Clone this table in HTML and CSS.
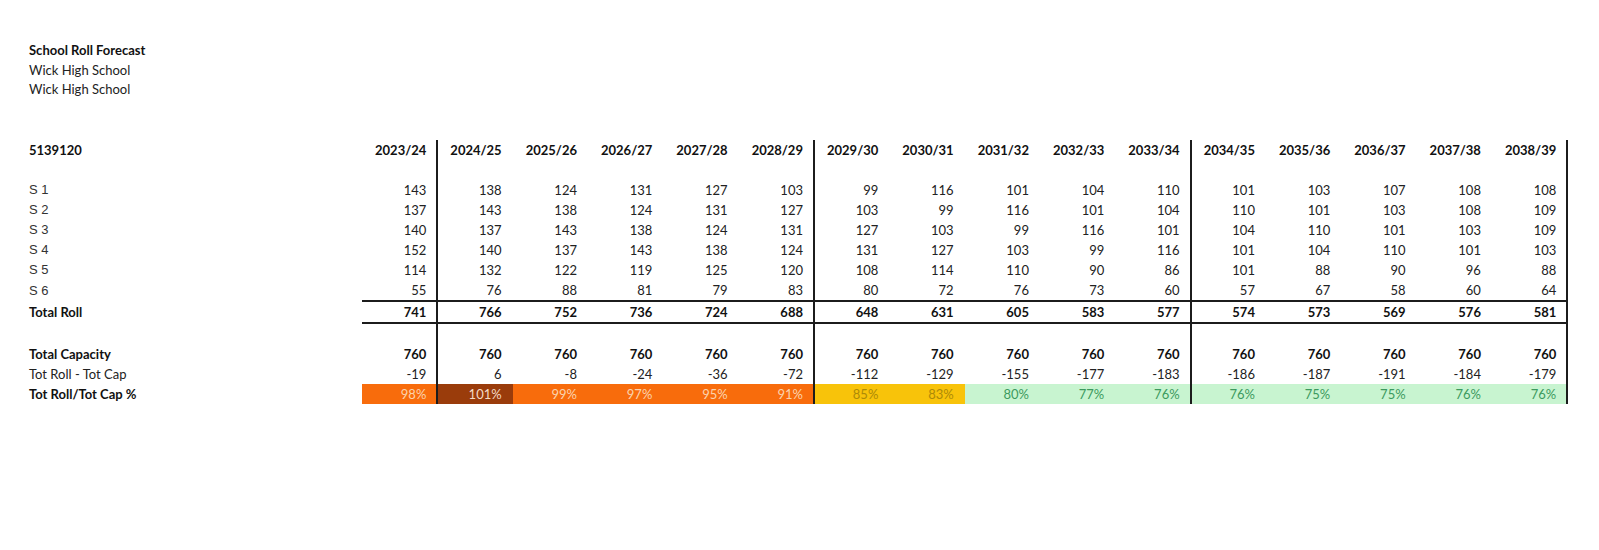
FILE: index.html
```html
<!DOCTYPE html>
<html>
<head>
<meta charset="utf-8">
<link rel="stylesheet" href="styles.css">
</head>
<body>
<div class="page">
  <div class="title">
    <div class="t-bold">School Roll Forecast</div>
    <div>Wick High School</div>
    <div>Wick High School</div>
  </div>
  <table class="grid">
    <colgroup>
      <col class="c-label">
      <col class="c-y"><col class="c-y"><col class="c-y"><col class="c-y"><col class="c-y"><col class="c-y"><col class="c-y"><col class="c-y">
      <col class="c-y"><col class="c-y"><col class="c-y"><col class="c-y"><col class="c-y"><col class="c-y"><col class="c-y"><col class="c-y">
    </colgroup>
    <tbody>
      <tr class="head">
        <td class="lbl b">5139120</td>
        <td class="s">2023/24</td><td>2024/25</td><td>2025/26</td><td>2026/27</td><td>2027/28</td><td class="s">2028/29</td>
        <td>2029/30</td><td>2030/31</td><td>2031/32</td><td>2032/33</td><td class="s">2033/34</td>
        <td>2034/35</td><td>2035/36</td><td>2036/37</td><td>2037/38</td><td class="s">2038/39</td>
      </tr>
      <tr class="blank">
        <td class="lbl"></td>
        <td class="s"></td><td></td><td></td><td></td><td></td><td class="s"></td>
        <td></td><td></td><td></td><td></td><td class="s"></td>
        <td></td><td></td><td></td><td></td><td class="s"></td>
      </tr>
      <tr>
        <td class="lbl ar">S 1</td>
        <td class="s">143</td><td>138</td><td>124</td><td>131</td><td>127</td><td class="s">103</td>
        <td>99</td><td>116</td><td>101</td><td>104</td><td class="s">110</td>
        <td>101</td><td>103</td><td>107</td><td>108</td><td class="s">108</td>
      </tr>
      <tr>
        <td class="lbl ar">S 2</td>
        <td class="s">137</td><td>143</td><td>138</td><td>124</td><td>131</td><td class="s">127</td>
        <td>103</td><td>99</td><td>116</td><td>101</td><td class="s">104</td>
        <td>110</td><td>101</td><td>103</td><td>108</td><td class="s">109</td>
      </tr>
      <tr>
        <td class="lbl ar">S 3</td>
        <td class="s">140</td><td>137</td><td>143</td><td>138</td><td>124</td><td class="s">131</td>
        <td>127</td><td>103</td><td>99</td><td>116</td><td class="s">101</td>
        <td>104</td><td>110</td><td>101</td><td>103</td><td class="s">109</td>
      </tr>
      <tr>
        <td class="lbl ar">S 4</td>
        <td class="s">152</td><td>140</td><td>137</td><td>143</td><td>138</td><td class="s">124</td>
        <td>131</td><td>127</td><td>103</td><td>99</td><td class="s">116</td>
        <td>101</td><td>104</td><td>110</td><td>101</td><td class="s">103</td>
      </tr>
      <tr>
        <td class="lbl ar">S 5</td>
        <td class="s">114</td><td>132</td><td>122</td><td>119</td><td>125</td><td class="s">120</td>
        <td>108</td><td>114</td><td>110</td><td>90</td><td class="s">86</td>
        <td>101</td><td>88</td><td>90</td><td>96</td><td class="s">88</td>
      </tr>
      <tr class="ruled">
        <td class="lbl ar">S 6</td>
        <td class="s">55</td><td>76</td><td>88</td><td>81</td><td>79</td><td class="s">83</td>
        <td>80</td><td>72</td><td>76</td><td>73</td><td class="s">60</td>
        <td>57</td><td>67</td><td>58</td><td>60</td><td class="s">64</td>
      </tr>
      <tr class="ruled bold">
        <td class="lbl">Total Roll</td>
        <td class="s">741</td><td>766</td><td>752</td><td>736</td><td>724</td><td class="s">688</td>
        <td>648</td><td>631</td><td>605</td><td>583</td><td class="s">577</td>
        <td>574</td><td>573</td><td>569</td><td>576</td><td class="s">581</td>
      </tr>
      <tr class="blank">
        <td class="lbl"></td>
        <td class="s"></td><td></td><td></td><td></td><td></td><td class="s"></td>
        <td></td><td></td><td></td><td></td><td class="s"></td>
        <td></td><td></td><td></td><td></td><td class="s"></td>
      </tr>
      <tr class="bold">
        <td class="lbl">Total Capacity</td>
        <td class="s">760</td><td>760</td><td>760</td><td>760</td><td>760</td><td class="s">760</td>
        <td>760</td><td>760</td><td>760</td><td>760</td><td class="s">760</td>
        <td>760</td><td>760</td><td>760</td><td>760</td><td class="s">760</td>
      </tr>
      <tr>
        <td class="lbl">Tot Roll - Tot Cap</td>
        <td class="s">-19</td><td>6</td><td>-8</td><td>-24</td><td>-36</td><td class="s">-72</td>
        <td>-112</td><td>-129</td><td>-155</td><td>-177</td><td class="s">-183</td>
        <td>-186</td><td>-187</td><td>-191</td><td>-184</td><td class="s">-179</td>
      </tr>
      <tr class="pct">
        <td class="lbl b">Tot Roll/Tot Cap %</td>
        <td class="s hi">98%</td><td class="over">101%</td><td class="hi">99%</td><td class="hi">97%</td><td class="hi">95%</td><td class="s hi">91%</td>
        <td class="mid">85%</td><td class="mid">83%</td><td class="ok">80%</td><td class="ok">77%</td><td class="s ok">76%</td>
        <td class="ok">76%</td><td class="ok">75%</td><td class="ok">75%</td><td class="ok">76%</td><td class="s ok">76%</td>
      </tr>
    </tbody>
  </table>
</div>
</body>
</html>
```

FILE: styles.css
```css
html, body {
  margin: 0;
  padding: 0;
  background: #ffffff;
}

.page {
  padding: 41px 0 0 29px;
  font-family: Lato, "Open Sans", sans-serif;
  font-size: 13px;
  color: #1e1e1e;
}

.title {
  line-height: 19.5px;
  height: 99px;
  color: #222;
}

.t-bold {
  font-weight: 700;
  color: #111;
}

.grid {
  border-collapse: collapse;
  table-layout: fixed;
  width: 1538px;
}

.c-label { width: 333px; }
.c-y { width: 75.33px; }

.grid td {
  height: 20px;
  line-height: 20px;
  padding: 0 11px 0 0;
  text-align: right;
  white-space: nowrap;
  color: #222;
}

.grid td.lbl {
  text-align: left;
  padding: 0;
}

.grid td.b,
.grid tr.bold td,
.grid tr.head td {
  font-weight: 700;
  color: #111;
}

.grid td.ar {
  font-family: "Liberation Sans", Arial, sans-serif;
  color: #333;
}

.grid td.s {
  border-right: 2px solid #1c1c1c;
  padding-right: 10px;
}

.grid tr.ruled td:not(.lbl) {
  border-bottom: 2px solid #1c1c1c;
}

.grid tr.blank td {
  height: 20px;
}

.grid tr.pct td.hi {
  background: #f86c0c;
  color: #fbd3ae;
}

.grid tr.pct td.over {
  background: #9a3c0b;
  color: #f4dac6;
}

.grid tr.pct td.mid {
  background: #f8c30a;
  color: #ad8a08;
}

.grid tr.pct td.ok {
  background: #c8f4d0;
  color: #3c9a5e;
}
```
